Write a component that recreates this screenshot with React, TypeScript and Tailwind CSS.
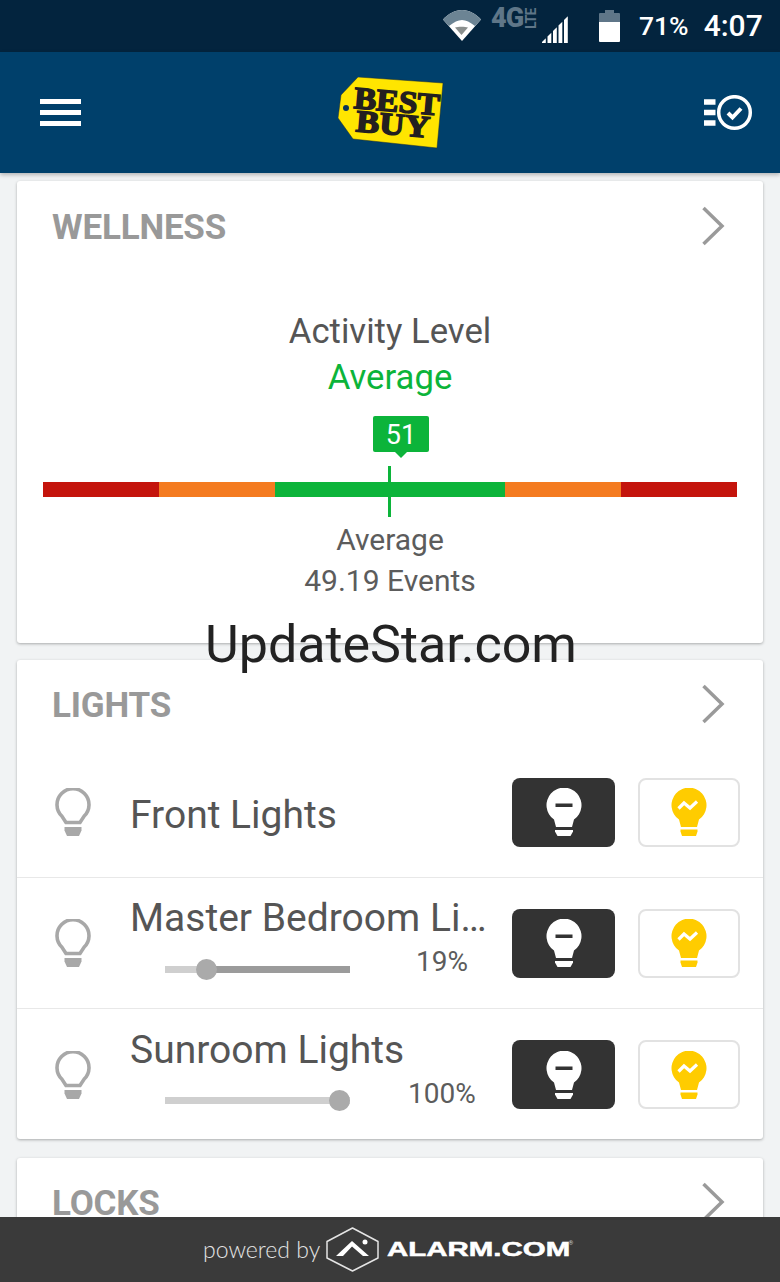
import type { ReactNode } from "react";

const ROBOTO = "font-['Roboto',sans-serif]";

function WifiIcon() {
  return (
    <svg width="38" height="32" viewBox="0 0 38 32" className="mt-[-2px]">
      <path d="M0 10.500C5 5 12 1 19 1s14 4 19 9.500L19 32z" fill="#fff" />
      <path d="M0 10.500C5 5 12 1 19 1s14 4 19 9.500l-6 6.500C27 13 23 11 19 11s-8 2-13 6z" fill="#6c8494" />
      <path d="M12 18.500c3-1 10-1 13 0L18.500 26z" fill="#8a8f8e" />
    </svg>
  );
}

function SignalIcon() {
  // five bars cut to one diagonal, so the tops form a wedge
  return (
    <svg width="27" height="28" viewBox="0 0 27 28">
      {[0, 1, 2, 3, 4].map((i) => {
        const x = i * 5.5;
        return <path key={i} d={`M${x} 28h3.800V${27 - (x + 3.8)}L${x} ${27 - x}z`} fill="#fff" />;
      })}
    </svg>
  );
}

function StatusBar() {
  return (
    <div className={`flex h-[52px] shrink-0 items-center bg-[#03243e] pl-[443px] ${ROBOTO}`}>
      <WifiIcon />
      <div className="ml-[10px] flex h-[20px] w-[48px] -translate-y-[8px] items-start text-[27px] leading-[20px] font-black tracking-[-1px] text-[#5f7688]">
        4G
        <span className="ml-[1px] rotate-180 text-[14px] leading-[15px] font-bold tracking-[-0.5px] [writing-mode:vertical-rl]">LTE</span>
      </div>
      <div className="ml-[3px] translate-y-[3px]">
        <SignalIcon />
      </div>
      <svg width="21" height="32" viewBox="0 0 21 32" className="ml-[30px]">
        <path d="M6 0h9v3h5a1 1 0 0 1 1 1v8H0V4a1 1 0 0 1 1-1h5z" fill="#5f7688" />
        <path d="M0 12h21v19a1 1 0 0 1-1 1H1a1 1 0 0 1-1-1z" fill="#fff" />
      </svg>
      <span className="ml-[19px] text-[26.500px] leading-none font-medium text-white">71%</span>
      <span className="ml-[15px] text-[30px] leading-none font-medium text-white">4:07</span>
    </div>
  );
}

function BestBuyLogo() {
  return (
    <svg width="106" height="72" viewBox="0 0 106 72">
      <path d="M20 0L105 6 99 71 15 62 0 41 3 18z" fill="#ffe500" stroke="#1c2a30" strokeWidth="0.500" />
      <circle cx="8" cy="31" r="3" fill="#0b3558" />
      <g transform="rotate(5 50 35)" fontFamily="'Liberation Serif', serif" fontWeight="700" fill="#231f20" stroke="#231f20" strokeWidth="1.500">
        <text x="15" y="34" fontSize="31" textLength="86" lengthAdjust="spacingAndGlyphs">BEST</text>
        <text x="19" y="57" fontSize="31" textLength="74" lengthAdjust="spacingAndGlyphs">BUY</text>
      </g>
    </svg>
  );
}

function TasksIcon() {
  return (
    <svg width="49" height="36" viewBox="0 0 49 36" fill="none">
      <path d="M0 7h11.500M0 17.500h11.500M0 28h11.500" stroke="#fff" strokeWidth="5.500" />
      <circle cx="30.500" cy="17.500" r="15.800" stroke="#fff" strokeWidth="3.500" />
      <path d="M24 18l4.500 4.500 8.500-9" stroke="#fff" strokeWidth="4" />
    </svg>
  );
}

function AppHeader() {
  return (
    <header className="z-10 flex h-[121px] shrink-0 items-center justify-between bg-[#00406b] pr-[27px] pl-[40px] shadow-[0_2px_4px_rgba(0,0,0,0.25)]">
      <div className="flex w-[41px] flex-col gap-[6px]">
        <span className="h-[5px] bg-white" />
        <span className="h-[5px] bg-white" />
        <span className="h-[5px] bg-white" />
      </div>
      <div className="translate-x-[-2px]">
        <BestBuyLogo />
      </div>
      <TasksIcon />
    </header>
  );
}

function Chevron() {
  return (
    <svg width="24" height="40" viewBox="0 0 24 40" fill="none" className="-translate-y-[1px]">
      <path d="M2.500 2L21 20 2.500 38" stroke="#9a9a9a" strokeWidth="3.500" />
    </svg>
  );
}

function Card({ title, titleClass, className, children }: { title: string; titleClass: string; className: string; children?: ReactNode }) {
  return (
    <section className={`mx-[17px] rounded-[3px] bg-white shadow-[0_1px_3px_rgba(0,0,0,0.3)] ${className}`}>
      <div className={`flex items-center justify-between pr-[38px] pl-[35px] ${titleClass}`}>
        <h2 className="text-[35px] leading-none font-bold tracking-[-0.2px] text-[#999999]">{title}</h2>
        <Chevron />
      </div>
      {children}
    </section>
  );
}

function ActivityBar() {
  return (
    <div className="relative mx-[26px] mt-[82px] flex h-[15px]">
      <div className="w-[116px] bg-[#c4140c]" />
      <div className="w-[116px] bg-[#f47b20]" />
      <div className="w-[231px] bg-[#0cb43a]" />
      <div className="w-[116px] bg-[#f47b20]" />
      <div className="w-[116px] bg-[#c4140c]" />
      {/* score flag and tick above the bar */}
      <div className="absolute top-[-66px] left-[330px] flex h-[36px] w-[56px] items-center justify-center rounded-[2px] bg-[#0cb43a] pt-[2px] text-[27px] leading-none text-white">
        51
        <span className="absolute top-[36px] left-[22px] h-0 w-0 border-x-[6px] border-t-[6px] border-x-transparent border-t-[#0cb43a]" />
      </div>
      <div className="absolute top-[-16px] left-[345px] h-[51px] w-[3px] bg-[#0cb43a]" />
    </div>
  );
}

function WellnessCard() {
  return (
    <Card title="WELLNESS" titleClass="h-[90px] pt-[2px]" className="mt-[8px] h-[462px]">
      <div className="flex flex-col items-center pt-[37px] text-[34.700px] leading-[46px]">
        <span className="text-[#555555]">Activity Level</span>
        <span className="text-[#0cb43a]">Average</span>
      </div>
      <ActivityBar />
      <div className="mt-[22px] flex flex-col items-center text-[30px] leading-[41px] text-[#5c5c5c]">
        <span>Average</span>
        <span>49.19 Events</span>
      </div>
    </Card>
  );
}

function OutlineBulb() {
  return (
    <svg width="36" height="48" viewBox="0 0 36 48" fill="none" className="ml-[38px] shrink-0">
      <path d="M11 34.500l-4-6.200A16 16 0 1 1 29 28.300l-4 6.200z" stroke="#a8a8a8" strokeWidth="3.600" />
      <path d="M9.500 39h17v3.500L24 48H12l-2.500-5.500z" fill="#a8a8a8" />
    </svg>
  );
}

function OffBulb() {
  return (
    <svg width="36" height="48" viewBox="0 0 36 48">
      <path d="M10 39L8 31.500A17.500 17.500 0 1 1 28 31.500L26 39z" fill="#fff" />
      <path d="M9 42h18v1.500L24.500 48h-13L9 43.500z" fill="#fff" />
      <rect x="9.500" y="15.500" width="17" height="3.500" fill="#333" />
    </svg>
  );
}

function OnBulb() {
  return (
    <svg width="36" height="48" viewBox="0 0 36 48">
      <path d="M10 39L8 31.500A17.500 17.500 0 1 1 28 31.500L26 39z" fill="#ffcc00" />
      <path d="M9.500 41.500h17v2L25 48H11l-1.500-4.500z" fill="#ffcc00" />
      <path d="M7.500 20.500l5.500-5.500 6 5 7-6.500" fill="none" stroke="#fff" strokeWidth="3.200" />
    </svg>
  );
}

function LightButtons() {
  return (
    <div className="ml-auto flex shrink-0 gap-[23px] pr-[23px]">
      <button type="button" className="flex h-[69px] w-[103px] items-center justify-center rounded-[8px] bg-[#333333]">
        <OffBulb />
      </button>
      <button type="button" className="flex h-[69px] w-[102px] items-center justify-center rounded-[8px] border-2 border-[#e2e2e2] bg-white">
        <OnBulb />
      </button>
    </div>
  );
}

function DimSlider({ percent, valueClass }: { percent: number; valueClass: string }) {
  return (
    <div className="mt-[14px] flex items-center pb-[8px]">
      <div className="relative ml-[35px] flex h-[7px] w-[185px] bg-[#cfcfcf]">
        <div className="h-full bg-[#cfcfcf]" style={{ width: `${percent}%` }} />
        <div className={`h-full flex-1 ${percent < 100 ? "bg-[#9b9b9b]" : "bg-[#cfcfcf]"}`} />
        <div className="absolute top-[-7px] h-[21px] w-[21px] rounded-full bg-[#aaaaaa]" style={{ left: `${(percent / 100) * 164}px` }} />
      </div>
      <span className={`-translate-y-[7px] text-[28px] leading-none text-[#5c5c5c] ${valueClass}`}>{percent}%</span>
    </div>
  );
}

function LightRow({ name, slider, className }: { name: string; slider?: ReactNode; className: string }) {
  return (
    <div className={`flex items-center border-[#e8e8e8] ${className}`}>
      <OutlineBulb />
      <div className={`ml-[39px] w-[357px] min-w-0 shrink-0 ${slider ? "" : "pt-[6px]"}`}>
        <div className="truncate text-[39px] leading-[46px] text-[#555555]">{name}</div>
        {slider}
      </div>
      <LightButtons />
    </div>
  );
}

function LightsCard() {
  return (
    <Card title="LIGHTS" titleClass="h-[90px]" className="mt-[17px] h-[479px]">
      <LightRow name="Front Lights" className="h-[128px] border-b pb-[3px]" />
      <LightRow
        name="Master Bedroom Lights"
        className="h-[131px] border-b"
        slider={<DimSlider percent={19} valueClass="ml-[66px]" />}
      />
      <LightRow
        name="Sunroom Lights"
        className="h-[131px]"
        slider={<DimSlider percent={100} valueClass="ml-[58px]" />}
      />
    </Card>
  );
}

function AlarmFooter() {
  return (
    <footer className="z-10 flex h-[65px] shrink-0 items-center bg-[#3a3a3a] pl-[203px] text-white">
      <span className="font-['Lato',sans-serif] text-[23px] leading-none font-light text-[#e4e4e4]">powered by</span>
      <svg width="53" height="45" viewBox="0 0 53 45" fill="none" className="ml-[6px]">
        <path d="M26.500 1L52 14.500V31L26.500 44 1 31V14.500z" stroke="#e4e4e4" strokeWidth="1.500" strokeLinejoin="round" />
        <path d="M10 29L26 14l17 15h-6L26 19.500 17 29z" fill="#fff" />
        <circle cx="39" cy="15" r="2.500" fill="#fff" />
      </svg>
      <span className="ml-[8px] origin-left scale-x-[1.51] font-['Liberation_Sans',sans-serif] text-[19.500px] leading-none font-bold text-white [-webkit-text-stroke:0.5px_white]">
        ALARM.COM
      </span>
      <span className="ml-[60px] -translate-y-[7px] text-[6px] leading-none text-[#cccccc]">®</span>
    </footer>
  );
}

export default function App() {
  return (
    <div className={`relative flex h-[1282px] w-[780px] flex-col overflow-hidden bg-[#f1f3f4] ${ROBOTO}`}>
      <StatusBar />
      <AppHeader />
      <main className="min-h-0 flex-1 overflow-hidden">
        <WellnessCard />
        <LightsCard />
        <Card title="LOCKS" titleClass="h-[90px]" className="mt-[19px] h-[120px]" />
      </main>
      <AlarmFooter />
      {/* site watermark sitting over the cards */}
      <div className="absolute top-[615px] left-[205px] text-[52px] leading-[60px] text-[#222222]">UpdateStar.com</div>
    </div>
  );
}
